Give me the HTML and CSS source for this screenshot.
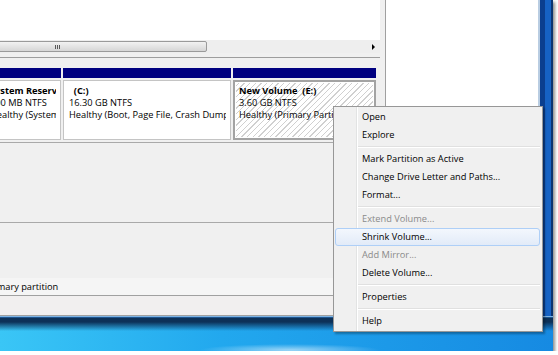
FILE: index.html
```html
<!DOCTYPE html>
<html lang="en">
<head>
    <meta charset="UTF-8">
    <title>Disk Management</title>
    <link rel="stylesheet" href="styles.css">
</head>
<body>
    <div class="shot">
        <div class="main">
            <div class="list-view"></div>
            <div class="hscroll">
                <div class="thumb"><span class="grip"></span></div>
                <div class="track"></div>
                <div class="arrow"><span class="arrow-tip"></span></div>
            </div>
            <div class="pane-gap"></div>
            <div class="graph">
                <div class="disk">
                    <div class="part part-sys">
                        <div class="part-head"></div>
                        <div class="part-body">
                            <div class="part-text">
                                <b>System Reserved</b>
                                <span>100 MB NTFS</span>
                                <span>Healthy (System, Active, Primary Partition)</span>
                            </div>
                        </div>
                    </div>
                    <div class="part part-c">
                        <div class="part-head"></div>
                        <div class="part-body">
                            <div class="part-text">
                                <b>&nbsp;&nbsp;(C:)</b>
                                <span>16.30 GB NTFS</span>
                                <span>Healthy (Boot, Page File, Crash Dump, Primary Partition)</span>
                            </div>
                        </div>
                    </div>
                    <div class="part part-e part-sel">
                        <div class="part-head"></div>
                        <div class="part-body">
                            <div class="part-text">
                                <b>New Volume&nbsp;&nbsp;(E:)</b>
                                <span>3.60 GB NTFS</span>
                                <span>Healthy (Primary Partition)</span>
                            </div>
                        </div>
                    </div>
                </div>
                <div class="cdrom"></div>
                <div class="graph-rest"></div>
            </div>
            <div class="legend"><span class="legend-text">Primary partition</span></div>
            <div class="status"></div>
        </div>
        <div class="splitter"></div>
        <div class="actions"></div>
        <div class="frame-right"></div>
        <div class="frame-bottom"></div>

        <ul class="menu">
            <li class="menu-item">Open</li>
            <li class="menu-item">Explore</li>
            <li class="menu-sep"></li>
            <li class="menu-item">Mark Partition as Active</li>
            <li class="menu-item">Change Drive Letter and Paths...</li>
            <li class="menu-item">Format...</li>
            <li class="menu-sep"></li>
            <li class="menu-item disabled">Extend Volume...</li>
            <li class="menu-item active">Shrink Volume...</li>
            <li class="menu-item disabled">Add Mirror...</li>
            <li class="menu-item">Delete Volume...</li>
            <li class="menu-sep"></li>
            <li class="menu-item">Properties</li>
            <li class="menu-sep"></li>
            <li class="menu-item">Help</li>
        </ul>
    </div>
</body>
</html>
```

FILE: styles.css
```css
body {
    margin: 0;
    background: #fff;
    font-family: "Open Sans", "Segoe UI", sans-serif;
    font-size: 9.25px;
    color: #000;
}
.shot {
    position: relative;
    width: 553px;
    height: 351px;
    display: grid;
    grid-template-columns: 380px 6px 152px 15px;
    grid-template-rows: 316px 35px;
    box-shadow: 2px 2px 3px rgba(0, 0, 0, 0.45);
}
.main {
    display: flex;
    flex-direction: column;
    overflow: hidden;
    background: #f0f0f0;
}
.list-view {
    height: 40px;
    background: #fff;
}
.hscroll {
    height: 13px;
    display: flex;
    background: #eeeeee;
    box-sizing: border-box;
    padding: 1px 0;
}
.thumb {
    margin-left: -93px;
    width: 300px;
    flex: none;
    box-sizing: border-box;
    border: 1px solid #9a9a9a;
    border-radius: 2px;
    background: linear-gradient(#f2f2f2, #d6d6d6);
    display: flex;
    align-items: center;
    justify-content: center;
}
.grip {
    width: 5px;
    height: 4px;
    background: repeating-linear-gradient(to right, #5a5a5a 0 1px, transparent 1px 2px);
}
.track {
    flex: 1;
}
.arrow {
    width: 14px;
    display: flex;
    align-items: center;
    justify-content: center;
}
.arrow-tip {
    border-left: 3px solid #000;
    border-top: 3px solid transparent;
    border-bottom: 3px solid transparent;
}
.pane-gap {
    height: 4px;
}
.graph {
    flex: 1;
    display: flex;
    flex-direction: column;
    border-top: 1px solid #9d9d9d;
}
.disk {
    display: flex;
    gap: 2px;
    margin-left: -16px;
    padding: 10px 0 2px;
    border-bottom: 1px solid #a9a9a9;
}
.part-sys { width: 77px; }
.part-c { width: 168px; }
.part-e { width: 143px; }
.part-head {
    height: 10px;
    margin-bottom: 2px;
    background: #000080;
}
.part-body {
    height: 60px;
    box-sizing: border-box;
    border: 1px solid #c4c4c4;
    background: #fff;
    padding: 4px 4px 0 5px;
}
.part-text {
    line-height: 12px;
    white-space: nowrap;
    overflow: hidden;
}
.part-text b,
.part-text span {
    display: block;
}
.part-sel .part-body {
    border: 2px solid #a3a3a3;
    padding: 3px 3px 0 4px;
    box-shadow: inset 0 0 0 1px #fff;
    background: repeating-linear-gradient(135deg, #fff 0 3px, #d0d0d0 3px 4px);
}
.cdrom {
    height: 79px;
    border-bottom: 1px solid #a9a9a9;
}
.graph-rest {
    flex: 1;
}
.legend {
    height: 17px;
    display: flex;
    align-items: center;
    background: #f5f5f5;
    white-space: nowrap;
}
.legend-text {
    margin-left: -15px;
}
.status {
    height: 21px;
    box-sizing: border-box;
    border-top: 1px solid #a0a0a0;
    border-bottom: 1px solid #a0a0a0;
    background: #f1efef;
}
.splitter {
    background: #f0f0f0;
    border-right: 1px solid #a0a0a0;
}
.actions {
    background: #fff;
}
.frame-right {
    background: linear-gradient(to right, #b9cde2 0 2px, #0b3f8f 2px 7px, #1662c4 7px 13px, #0a3470 13px);
}
.frame-bottom {
    grid-column: 1 / 5;
    background:
        linear-gradient(#7fb4e4 0 1px, #1d5590 1px 2px, #0d3158 2px 6px, rgba(13, 49, 88, 0) 15px),
        radial-gradient(ellipse 90px 6px at 290px 34px, rgba(255, 255, 255, 0.55), rgba(255, 255, 255, 0)),
        linear-gradient(to right, #3ac6f6, #22a8ee 40%, #168ae2);
}
.menu {
    position: absolute;
    left: 333px;
    top: 106px;
    width: 210px;
    box-sizing: border-box;
    margin: 0;
    padding: 1px 0;
    list-style: none;
    border: 1px solid #979797;
    background: #f0f0f0 linear-gradient(to right, transparent 22px, #e2e3e3 22px 23px, #fff 23px 24px, transparent 24px);
    box-shadow: 2px 2px 2px rgba(0, 0, 0, 0.3);
}
.menu-item {
    height: 18px;
    box-sizing: border-box;
    line-height: 16px;
    margin: 0 2px 0 1px;
    padding-left: 26px;
    border: 1px solid transparent;
    border-radius: 3px;
    white-space: nowrap;
}
.menu-item.active {
    border-color: #aecff7;
    background: linear-gradient(#f3f7fd, #e2ebf8);
}
.menu-item.disabled {
    color: #8a8a8a;
}
.menu-sep {
    height: 6px;
    margin: 0 2px 0 24px;
    background: linear-gradient(transparent 2px, #e0e0e0 2px 3px, #fff 3px 4px, transparent 4px);
}
```
